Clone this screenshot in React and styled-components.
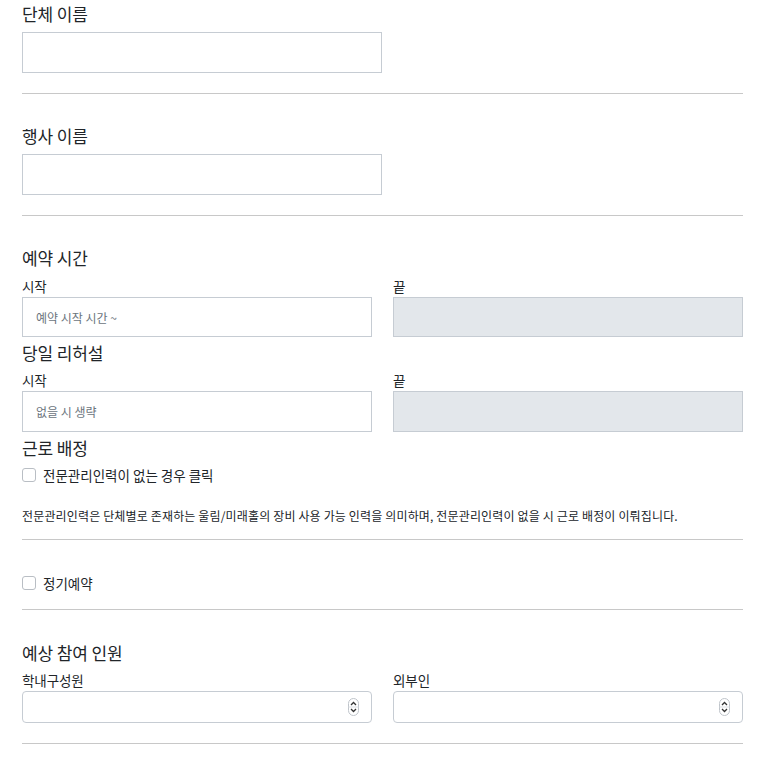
import styled, { createGlobalStyle } from 'styled-components';

const Global = createGlobalStyle`
  body {
    margin: 0;
    background: #fff;
    font-family: "Noto Sans CJK KR", "Noto Sans", sans-serif;
    color: #212529;
  }
`;

const Page = styled.div`
  width: 721px;
  padding: 2px 0 0 22px;
`;

const Section = styled.section`
  display: flex;
  flex-direction: column;
`;

const Title = styled.h2`
  margin: ${p => p.$top || 0}px 0 0;
  font-size: 17px;
  font-weight: 400;
  line-height: 24px;
  letter-spacing: -0.1px;
`;

const Divider = styled.hr`
  width: 100%;
  margin: ${p => p.$top || 20}px 0 0;
  border: 0;
  border-top: 1px solid #c8c8c8;
`;

const TextInput = styled.input`
  box-sizing: border-box;
  width: ${p => p.$width || 360}px;
  height: ${p => p.$height || 41}px;
  margin-top: ${p => p.$top || 0}px;
  border: 1px solid #c6ccd3;
  border-radius: 0;
  padding: 0 13px;
  background: ${p => (p.disabled ? '#e3e7eb' : '#fff')};
  font-family: inherit;
  font-size: 12px;
  color: #333;
  outline: none;

  &::placeholder {
    color: #6c757d;
  }
`;

const Pair = styled.div`
  display: grid;
  grid-template-columns: 350px 350px;
  column-gap: 21px;
  margin-top: ${p => p.$top || 0}px;
`;

const Field = styled.div`
  display: flex;
  flex-direction: column;
`;

const Label = styled.label`
  font-size: 13.5px;
  line-height: 20px;
  letter-spacing: -0.1px;
  margin-bottom: 1px;
`;

const CheckRow = styled.label`
  display: flex;
  align-items: center;
  gap: 7px;
  margin-top: ${p => p.$top || 0}px;
  height: 20px;
  font-size: 13.5px;
  letter-spacing: 0;
`;

const Box = styled.span`
  box-sizing: border-box;
  width: 14px;
  height: 14px;
  border: 1px solid #b9bec4;
  border-radius: 3px;
  background: #fff;
`;

const Notice = styled.p`
  margin: 21px 0 0;
  font-size: 12px;
  line-height: 20px;
  letter-spacing: 0.15px;
`;

const NumberWrap = styled.div`
  position: relative;
  width: 350px;
`;

const NumberInput = styled.input`
  box-sizing: border-box;
  width: 100%;
  height: 32px;
  border: 1px solid #c6ccd3;
  border-radius: 4px;
  padding: 0 12px;
  font-family: inherit;
  outline: none;
  -moz-appearance: textfield;

  &::-webkit-inner-spin-button,
  &::-webkit-outer-spin-button {
    -webkit-appearance: none;
    margin: 0;
  }
`;

const Spinner = styled.svg`
  position: absolute;
  right: 13px;
  top: 7px;
`;

const Spin = () => (
  <Spinner width="11" height="18" viewBox="0 0 11 18">
    <rect x="0.5" y="0.5" width="10" height="17" rx="5" fill="#fff" stroke="#bfc4ca" />
    <line x1="0.5" y1="9" x2="10.5" y2="9" stroke="#dde0e4" />
    <path d="M3 7 L5.5 4.5 L8 7" fill="none" stroke="#333" strokeWidth="1.3" />
    <path d="M3 11 L5.5 13.5 L8 11" fill="none" stroke="#333" strokeWidth="1.3" />
  </Spinner>
);

const App = () => {
  return (
    <Page>
      <Global />
      <Section>
        <Title>단체 이름</Title>
        <TextInput $top={6} />
        <Divider />
      </Section>

      <Section>
        <Title $top={30}>행사 이름</Title>
        <TextInput $top={6} $height={41} />
        <Divider />
      </Section>

      <Section>
        <Title $top={30}>예약 시간</Title>
        <Pair $top={6}>
          <Field>
            <Label>시작</Label>
            <TextInput $width={350} $height={40} placeholder="예약 시작 시간 ~" />
          </Field>
          <Field>
            <Label>끝</Label>
            <TextInput $width={350} $height={40} disabled />
          </Field>
        </Pair>

        <Title $top={4}>당일 리허설</Title>
        <Pair $top={5}>
          <Field>
            <Label>시작</Label>
            <TextInput $width={350} placeholder="없을 시 생략" />
          </Field>
          <Field>
            <Label>끝</Label>
            <TextInput $width={350} disabled />
          </Field>
        </Pair>

        <Title $top={4}>근로 배정</Title>
        <CheckRow $top={5}>
          <Box />
          전문관리인력이 없는 경우 클릭
        </CheckRow>
        <Notice>
          전문관리인력은 단체별로 존재하는 울림/미래홀의 장비 사용 가능 인력을 의미하며, 전문관리인력이 없을 시 근로 배정이 이뤄집니다.
        </Notice>
        <Divider $top={13} />
      </Section>

      <Section>
        <Checkbox />
      </Section>

      <Section>
        <Title $top={31}>예상 참여 인원</Title>
        <Pair $top={5}>
          <Field>
            <Label>학내구성원</Label>
            <NumberWrap>
              <NumberInput type="number" />
              <Spin />
            </NumberWrap>
          </Field>
          <Field>
            <Label>외부인</Label>
            <NumberWrap>
              <NumberInput type="number" />
              <Spin />
            </NumberWrap>
          </Field>
        </Pair>
        <Divider />
      </Section>
    </Page>
  );
};

const Checkbox = () => (
  <>
    <CheckRow $top={33}>
      <Box />
      정기예약
    </CheckRow>
    <Divider $top={16} />
  </>
);

export default App;
